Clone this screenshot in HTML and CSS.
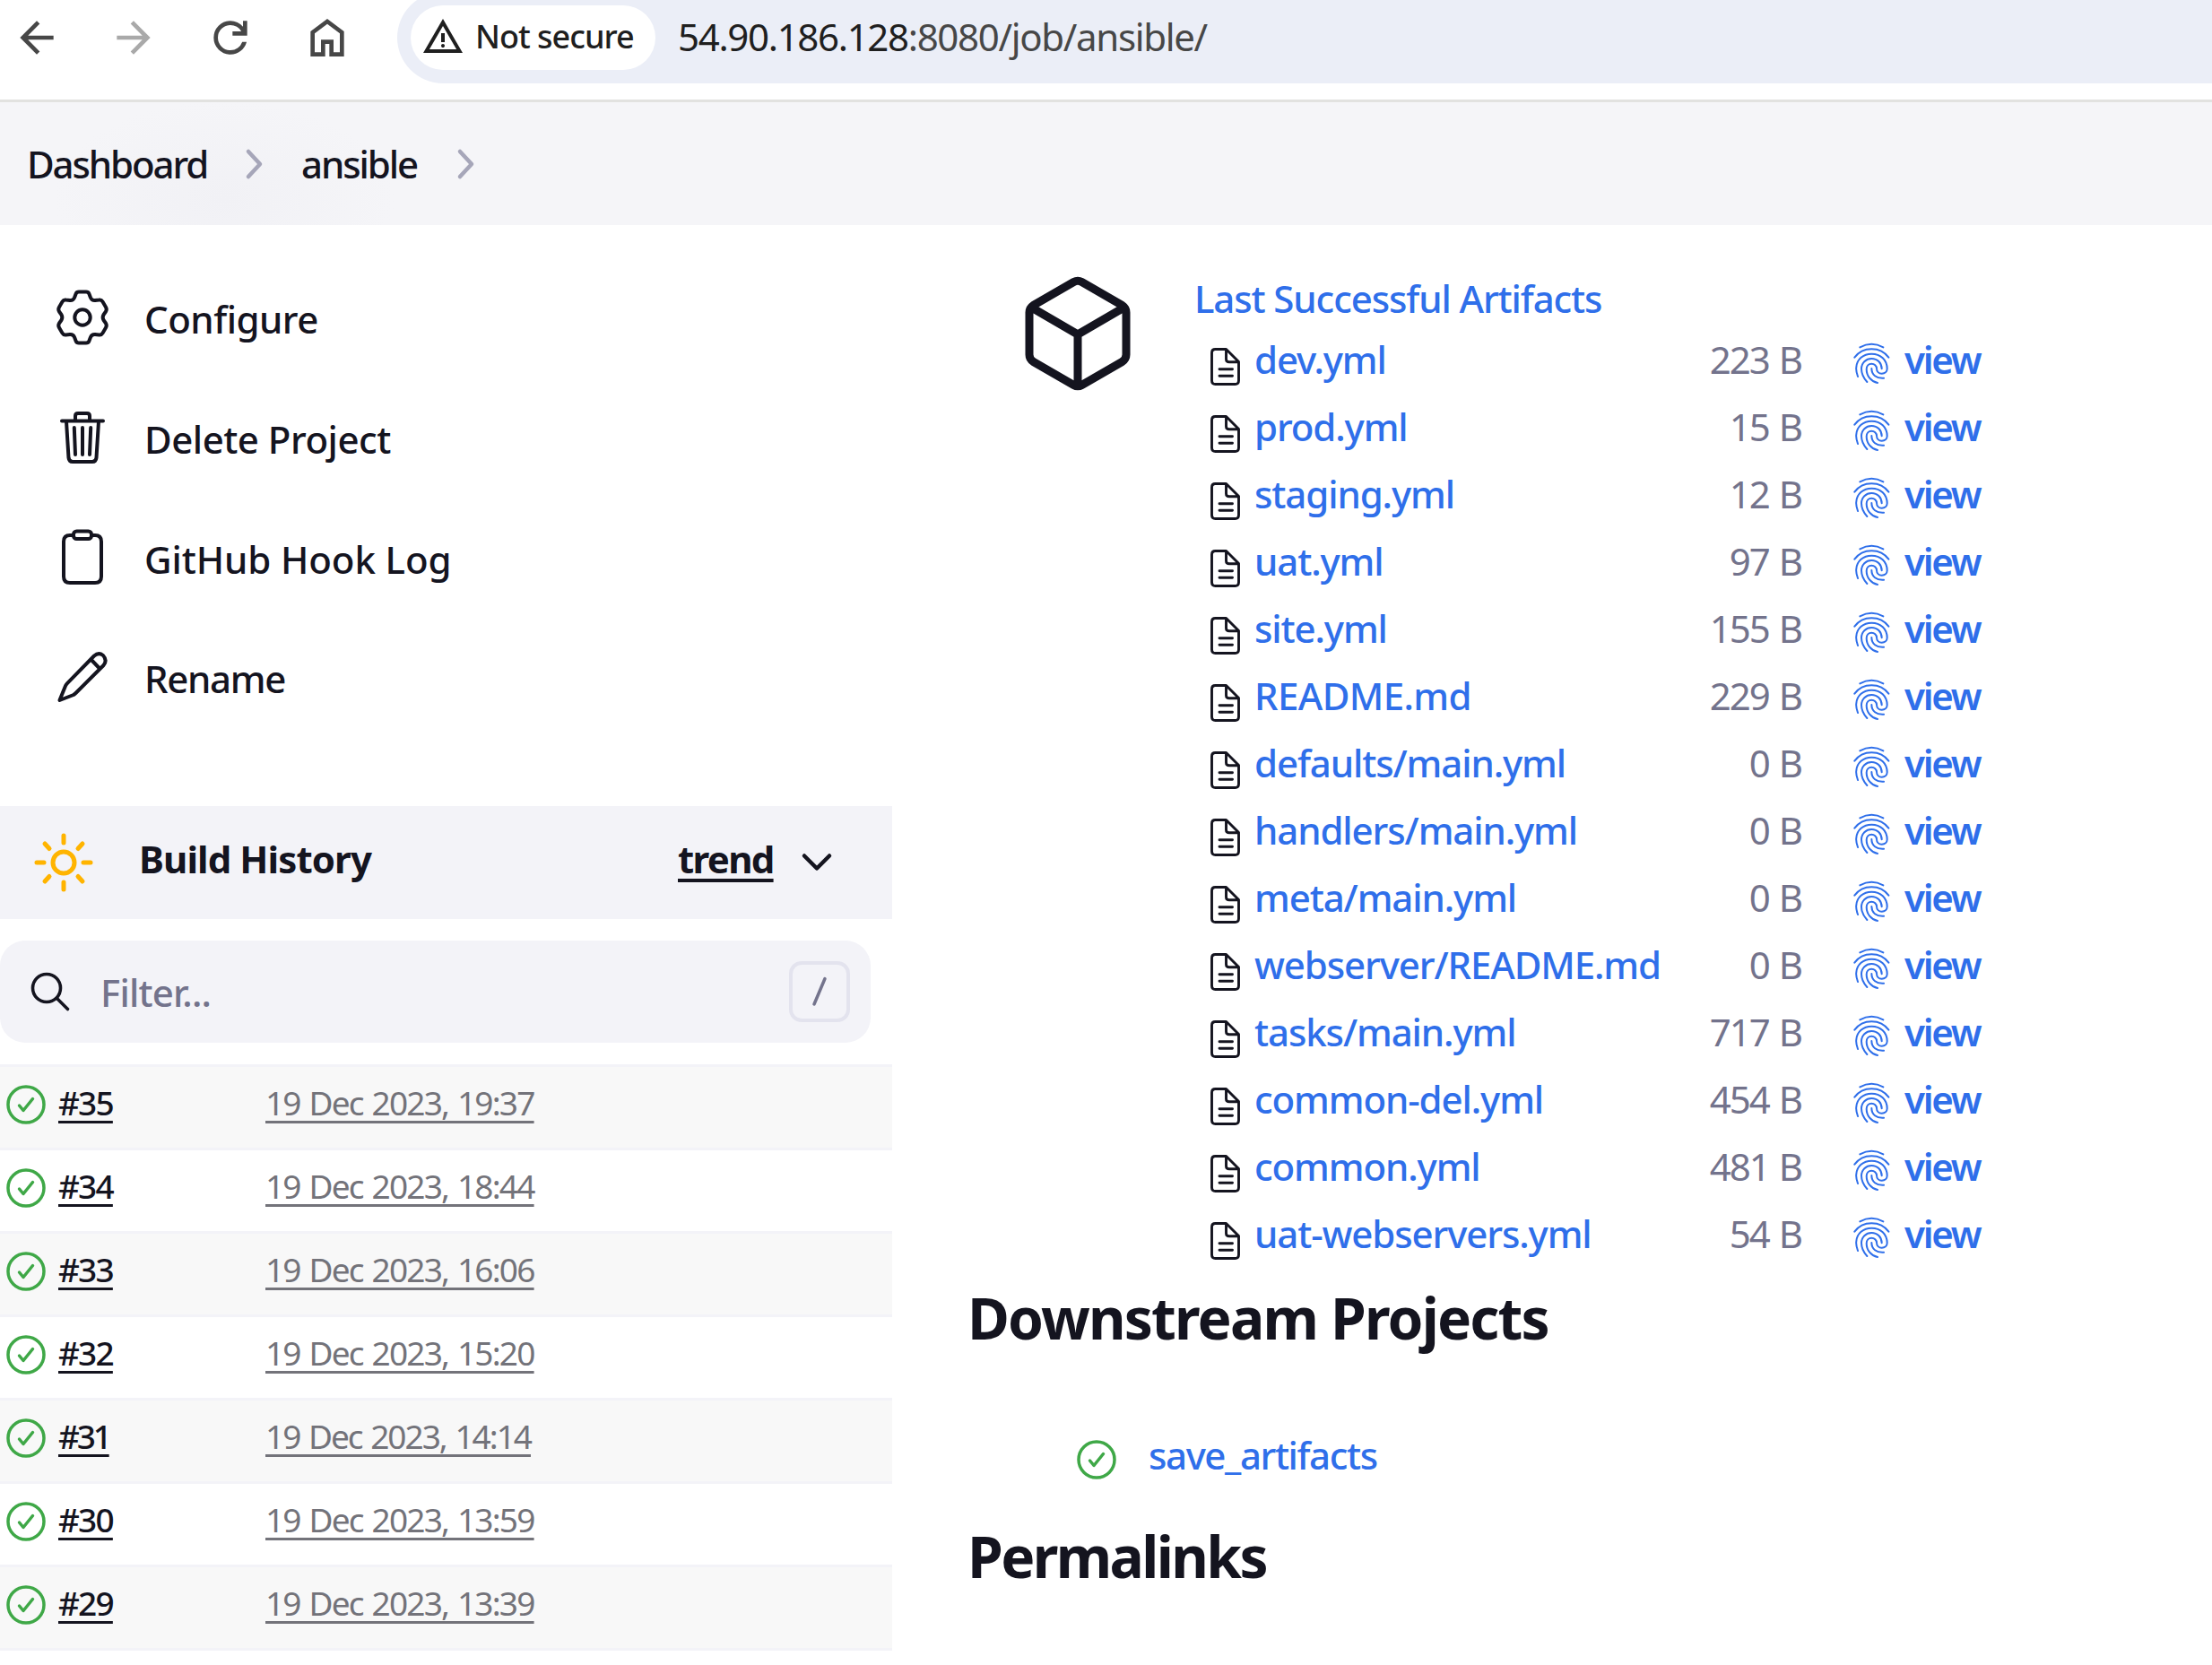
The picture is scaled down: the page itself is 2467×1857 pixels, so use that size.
FILE: index.html
```html
<!DOCTYPE html>
<html lang="en">
<head>
<meta charset="utf-8">
<title>ansible [Jenkins]</title>
<link rel="stylesheet" href="styles.css">
</head>
<body>
<svg class="sprite" aria-hidden="true">
  <symbol id="file" viewBox="0 0 36 44">
    <path d="M6.5 2.5H18.5L32.5 16.5V37.5Q32.5 41.5 28.500 41.500H6.500Q2.500 41.500 2.500 37.500V6.500Q2.500 2.500 6.500 2.500ZM18.500 3V13.500Q18.500 16.800 22 16.800H32M11 24.700H25.500M11 32.200H25.500"/>
  </symbol>
  <symbol id="finger" viewBox="650 305 128 146">
    <path d="M675 324Q714 303 753 324M657 358C684 320 744 320 771 358M668 422C662 405 662 395 663 390C665 364 686 346 714 346C744 346 766 366 766 396C766 406 758 412 748 412C738 412 731 405 731 395C731 386 723 379 714 379C704 379 697 387 697 397C697 420 712 438 734 443M699 440C686 426 680 412 680 396C680 376 695 362 714 362C734 362 748 377 748 396M714 395C714 416 730 429 755 427"/>
  </symbol>
  <symbol id="ok" viewBox="0 0 48 48">
    <circle cx="24" cy="24" r="20"/><path d="M16.500 25L21 30.500L31.500 17.500"/>
  </symbol>
  <symbol id="sep" viewBox="0 0 24 38"><path d="M5 5L18 19L5 33"/></symbol>
</svg>

<header class="toolbar">
  <nav class="nav">
    <svg class="nav-icon" viewBox="0 -960 960 960"><path d="m313-440 224 224-57 56-320-320 320-320 57 56-224 224h487v80H313Z"/></svg>
    <svg class="nav-icon off" viewBox="0 -960 960 960"><path d="m647-440-224 224 57 56 320-320-320-320-57 56 224 224H160v80h487Z"/></svg>
    <svg class="nav-icon" viewBox="0 -960 960 960"><path d="M480-160q-134 0-227-93t-93-227q0-134 93-227t227-93q69 0 132 28.500T720-690v-110h80v280H520v-80h168q-32-56-87.500-88T480-720q-100 0-170 70t-70 170q0 100 70 170t170 70q77 0 139-44t87-116h84q-28 106-114 173t-196 67Z"/></svg>
    <svg class="nav-icon" viewBox="0 -960 960 960"><path d="M240-200h120v-240h240v240h120v-360L480-740 240-560v360Zm-80 80v-480l320-240 320 240v480H520v-240h-80v240H160Z"/></svg>
  </nav>
  <div class="address">
    <div class="chip">
      <svg viewBox="0 -960 960 960"><path d="m40-120 440-760 440 760H40Zm138-80h604L480-720 178-200Zm302-40q17 0 28.500-11.500T520-280q0-17-11.500-28.500T480-320q-17 0-28.500 11.500T440-280q0 17 11.500 28.500T480-240Zm-40-120h80v-200h-80v200Z"/></svg>
      <span>Not secure</span>
    </div>
    <span class="url"><b>54.90.186.128</b>:8080/job/ansible/</span>
  </div>
</header>

<nav class="crumbs">
  <a>Dashboard</a><svg class="sep"><use href="#sep"/></svg>
  <a>ansible</a><svg class="sep"><use href="#sep"/></svg>
</nav>

<div class="page">
  <aside class="side">
    <ul class="tasks">
      <li><svg viewBox="-32 -32 64 64"><path d="M-4 -28.500H4Q6.500 -28.500 7.300 -26.500L9 -22Q10.500 -18.700 14 -19L18.500 -19.500Q21 -20 22.500 -17.500L26 -11.500Q27.500 -9 26 -6.500L23.500 -3Q21.800 0 23.500 3L26 6.500Q27.500 9 26 11.500L22.500 17.500Q21 20 18.500 19.500L14 19Q10.500 18.700 9 22L7.300 26.500Q6.500 28.500 4 28.500H-4Q-6.500 28.500 -7.300 26.500L-9 22Q-10.500 18.700 -14 19L-18.500 19.500Q-21 20 -22.500 17.500L-26 11.500Q-27.500 9 -26 6.500L-23.500 3Q-21.800 0 -23.500 -3L-26 -6.500Q-27.500 -9 -26 -11.500L-22.500 -17.500Q-21 -20 -18.500 -19.500L-14 -19Q-10.500 -18.700 -9 -22L-7.300 -26.500Q-6.500 -28.500 -4 -28.500Z"/><circle r="8.700"/></svg><span>Configure</span></li>
      <li><svg viewBox="-32 -32 64 64"><path d="M-18 -18L-15.500 22.500Q-15 27 -11 27H11Q15 27 15.500 22.500L18 -18M-23 -18.500H23M-8 -19V-24Q-8 -27 -5 -27H5Q8 -27 8 -24V-19M0 -11V19M-9.200 -11L-8 19M9.200 -11L8 19"/></svg><span>Delete Project</span></li>
      <li><svg viewBox="-32 -32 64 64"><path d="M-11 -24H-14Q-21 -24 -21 -17V22Q-21 29 -14 29H14Q21 29 21 22V-17Q21 -24 14 -24H11"/><rect x="-10" y="-28.500" width="20" height="8.500" rx="3.500"/></svg><span>GitHub Hook Log</span></li>
      <li><svg viewBox="-32 -32 64 64"><path d="M-25.500 26L-19 10Q-18.500 8.700 -17 7.200L13 -23.500Q18 -28 23 -24Q28 -18.500 23.500 -13L-7 17.500Q-8.500 19 -10 20ZM9.500 -19.500L19 -9.500"/></svg><span>Rename</span></li>
    </ul>

    <section class="history">
      <div class="history-bar">
        <svg class="sun" viewBox="-34 -34 68 68"><circle r="12"/><path d="M0 -30V-22M0 22V30M-30 0H-22M22 0H30M-21 -21L-16 -15.500M21 -21L16 -15.500M-21 21L-16 15.500M21 21L16 15.500"/></svg>
        <h2>Build History</h2>
        <a class="trend">trend</a>
        <svg class="chev" viewBox="0 0 36 24"><path d="M4 4.500L18 18.500L32 4.500"/></svg>
      </div>
      <div class="filter">
        <svg class="search" viewBox="0 0 48 48"><circle cx="20" cy="20" r="15.500"/><path d="M31.500 31.500L43.500 43.500"/></svg>
        <span class="hint">Filter...</span>
        <span class="key"><svg viewBox="0 0 20 36"><path d="M4 32L16 3.500"/></svg></span>
      </div>
      <ul class="builds">
        <li><svg class="ok"><use href="#ok"/></svg><a class="num">#35</a><a class="date">19 Dec 2023, 19:37</a></li>
        <li><svg class="ok"><use href="#ok"/></svg><a class="num">#34</a><a class="date">19 Dec 2023, 18:44</a></li>
        <li><svg class="ok"><use href="#ok"/></svg><a class="num">#33</a><a class="date">19 Dec 2023, 16:06</a></li>
        <li><svg class="ok"><use href="#ok"/></svg><a class="num">#32</a><a class="date">19 Dec 2023, 15:20</a></li>
        <li><svg class="ok"><use href="#ok"/></svg><a class="num narrow">#31</a><a class="date narrow">19 Dec 2023, 14:14</a></li>
        <li><svg class="ok"><use href="#ok"/></svg><a class="num">#30</a><a class="date">19 Dec 2023, 13:59</a></li>
        <li><svg class="ok"><use href="#ok"/></svg><a class="num">#29</a><a class="date">19 Dec 2023, 13:39</a></li>
      </ul>
    </section>
  </aside>

  <main class="main">
    <section class="artifacts">
      <svg class="cube" viewBox="0 0 120 130"><path d="M55.500 7.500Q60 5 64.500 7.500L109.500 33.500Q114 36.500 114 41.500V88.500Q114 93.500 109.500 96.500L64.500 122.500Q60 125 55.500 122.500L10.500 96.500Q6 93.500 6 88.500V41.500Q6 36.500 10.500 33.500ZM8.500 36L60 66L111.500 36M60 66V123"/></svg>
      <div>
        <a class="art-title">Last Successful Artifacts</a>
        <ul class="files">
          <li><svg class="file"><use href="#file"/></svg><a>dev.yml</a><span>223 B</span><svg class="finger"><use href="#finger"/></svg><a class="view">view</a></li>
          <li><svg class="file"><use href="#file"/></svg><a>prod.yml</a><span>15 B</span><svg class="finger"><use href="#finger"/></svg><a class="view">view</a></li>
          <li><svg class="file"><use href="#file"/></svg><a>staging.yml</a><span>12 B</span><svg class="finger"><use href="#finger"/></svg><a class="view">view</a></li>
          <li><svg class="file"><use href="#file"/></svg><a>uat.yml</a><span>97 B</span><svg class="finger"><use href="#finger"/></svg><a class="view">view</a></li>
          <li><svg class="file"><use href="#file"/></svg><a>site.yml</a><span>155 B</span><svg class="finger"><use href="#finger"/></svg><a class="view">view</a></li>
          <li><svg class="file"><use href="#file"/></svg><a class="caps">README.md</a><span>229 B</span><svg class="finger"><use href="#finger"/></svg><a class="view">view</a></li>
          <li><svg class="file"><use href="#file"/></svg><a>defaults/main.yml</a><span>0 B</span><svg class="finger"><use href="#finger"/></svg><a class="view">view</a></li>
          <li><svg class="file"><use href="#file"/></svg><a>handlers/main.yml</a><span>0 B</span><svg class="finger"><use href="#finger"/></svg><a class="view">view</a></li>
          <li><svg class="file"><use href="#file"/></svg><a>meta/main.yml</a><span>0 B</span><svg class="finger"><use href="#finger"/></svg><a class="view">view</a></li>
          <li><svg class="file"><use href="#file"/></svg><a>webserver/README.md</a><span>0 B</span><svg class="finger"><use href="#finger"/></svg><a class="view">view</a></li>
          <li><svg class="file"><use href="#file"/></svg><a>tasks/main.yml</a><span>717 B</span><svg class="finger"><use href="#finger"/></svg><a class="view">view</a></li>
          <li><svg class="file"><use href="#file"/></svg><a>common-del.yml</a><span>454 B</span><svg class="finger"><use href="#finger"/></svg><a class="view">view</a></li>
          <li><svg class="file"><use href="#file"/></svg><a>common.yml</a><span>481 B</span><svg class="finger"><use href="#finger"/></svg><a class="view">view</a></li>
          <li><svg class="file"><use href="#file"/></svg><a>uat-webservers.yml</a><span>54 B</span><svg class="finger"><use href="#finger"/></svg><a class="view">view</a></li>
        </ul>
      </div>
    </section>
    <h1>Downstream Projects</h1>
    <div class="downstream"><svg class="ok"><use href="#ok"/></svg><a>save_artifacts</a></div>
    <h1 class="perma">Permalinks</h1>
  </main>
</div>
</body>
</html>
```
FILE: styles.css
```css
* { box-sizing: border-box; }

body {
  margin: 0;
  width: 2467px;
  height: 1857px;
  overflow: hidden;
  background: #fff;
  color: #14141f;
  font: 500 42px/60px "Noto Sans", "Open Sans", sans-serif;
}

ul { list-style: none; margin: 0; padding: 0; }
h1, h2 { margin: 0; }
svg { display: block; flex: none; fill: none; stroke: currentColor; stroke-linecap: round; stroke-linejoin: round; }
.sprite { position: absolute; width: 0; height: 0; }

/* browser toolbar */
.toolbar {
  height: 114px;
  border-bottom: 3px solid #e2e2e0;
  display: flex;
  overflow: hidden;
}
.nav { display: flex; gap: 52px; padding: 14px 0 0 13px; width: 443px; flex: none; }
.nav-icon { width: 56px; height: 56px; fill: #474747; stroke: none; }
.nav-icon.off { fill: #a9a9a9; }
.address {
  flex: 1;
  height: 102px;
  margin-top: -9px;
  padding: 15px 0 0 15px;
  background: #ebeef7;
  border-radius: 51px 0 0 51px;
  display: flex;
}
.chip {
  width: 273px;
  height: 72px;
  padding-left: 12px;
  border-radius: 36px;
  background: #fff;
  color: #1f1f1f;
  display: flex;
  align-items: center;
  gap: 12px;
  font-size: 36px;
  letter-spacing: -1px;
  white-space: nowrap;
}
.chip svg { width: 48px; height: 48px; fill: #1f1f1f; stroke: none; margin-top: -2px; }
.chip span { margin-top: -2px; }
.url { margin: 5px 0 0 25px; font-weight: 400; color: #474747; letter-spacing: -1.33px; }
.url b { font-weight: 400; color: #1f1f1f; }

/* breadcrumbs */
.crumbs {
  height: 137px;
  padding-left: 30px;
  display: flex;
  align-items: center;
  background: radial-gradient(ellipse 190px 110px at 250px 108px, #f1f1f5, #f5f5f8) #f5f5f8;
  letter-spacing: -2.1px;
}
.crumbs a { width: 242px; padding-top: 1px; }
.crumbs a + svg + a { width: 172px; }
.sep { width: 24px; height: 38px; color: #a6a6b9; stroke-width: 4.500px; margin-right: 40px; }

.page { display: flex; }
.side { width: 995px; flex: none; padding-top: 36px; }

/* side tasks */
.tasks li { height: 133.700px; padding-left: 60px; display: flex; align-items: center; gap: 37px; letter-spacing: -0.5px; }
.tasks svg { width: 64px; height: 64px; stroke-width: 4px; }
.tasks span { padding-top: 5px; }
.tasks li:nth-child(3) { letter-spacing: -0.1px; }
.tasks li:nth-child(4) { letter-spacing: -1.3px; }

/* build history */
.history { margin-top: 77px; }
.history-bar { height: 126px; background: #f3f3f8; display: flex; align-items: center; padding-left: 37px; }
.sun { width: 68px; height: 68px; color: #ffb400; stroke-width: 5px; }
.history-bar h2 { font-size: 42px; font-weight: 700; letter-spacing: -0.9px; margin: -8px 0 0 50px; width: 601px; }
.trend {
  font-weight: 700;
  letter-spacing: -1.7px;
  margin-top: -8px;
  width: 107px;
  text-decoration: underline 4px;
  text-underline-offset: 6px;
}
.chev { width: 36px; height: 24px; stroke-width: 4.500px; margin-left: 30px; }
.filter {
  width: 971px;
  height: 114px;
  margin: 24px 0;
  padding: 0 23px 0 32px;
  border-radius: 28px;
  background: #f3f3f8;
  display: flex;
  align-items: center;
}
.search { width: 48px; height: 48px; stroke-width: 3.600px; }
.hint { flex: 1; margin: 2px 0 0 32px; color: #73738c; letter-spacing: -0.8px; }
.key { width: 68px; height: 68px; border: 4px solid #e3e3ee; border-radius: 14px; color: #73738c; display: grid; place-items: center; }
.key svg { width: 20px; height: 36px; stroke-width: 3.500px; }

.builds { border-top: 3px solid #f3f3f8; font-size: 37px; font-weight: 400; letter-spacing: -1.8px; word-spacing: 2px; }
.builds li { height: 93px; padding: 0 0 6px 5px; border-bottom: 3px solid #f3f3f8; display: flex; align-items: center; }
.builds li:nth-child(odd) { background: #f8f8f8; }
.builds a, .trend { text-decoration-skip-ink: none; }
.builds a { text-decoration: underline 3px; text-underline-offset: 6px; margin-top: -3px; }
.ok { width: 48px; height: 48px; color: #3fa847; stroke-width: 3.500px; }
.builds .num { width: 61px; margin: -3px 170px 0 12px; font-weight: 500; letter-spacing: -1.8px; white-space: nowrap; }
.builds .date { color: #73737a; }
.builds .num.narrow { letter-spacing: -3.200px; }
.builds .date.narrow { letter-spacing: -2px; }

/* main panel */
.main { padding: 51px 0 0 86px; }
.artifacts { display: flex; }
.cube { width: 120px; height: 130px; stroke-width: 9px; margin: 5px 70px 0 61px; }
.artifacts a, .downstream a { color: #2f6fea; letter-spacing: -1.1px; white-space: nowrap; }
.art-title { display: block; line-height: 61px; }
.files li { height: 75px; padding-left: 17px; display: grid; grid-template-columns: 50px 400px 210px 115px auto; align-items: center; }
.files li > a, .files li > span { padding-top: 1px; }
.file { width: 36px; height: 44px; stroke-width: 2.900px; margin-top: 17px; }
.finger { width: 42.700px; height: 48.700px; color: #2f6fea; stroke-width: 6px; justify-self: end; margin: 10px 15px 0 0; }
.files span { text-align: right; color: #73738c; font-weight: 400; letter-spacing: -2px; word-spacing: 2px; }
.files a.view { font-weight: 600; letter-spacing: -2.3px; }
.files a.caps { letter-spacing: -0.6px; }
h1 { font-size: 64px; font-weight: 700; line-height: 80px; letter-spacing: -1.800px; margin: 17px 0 0 -2px; }
.downstream { display: flex; align-items: center; margin: 83px 0 0 118px; }
.downstream .ok { margin: 9px 34px 0 0; }
.downstream a { letter-spacing: -1.4px; }
h1.perma { margin-top: 43px; letter-spacing: -2.600px; }
```
